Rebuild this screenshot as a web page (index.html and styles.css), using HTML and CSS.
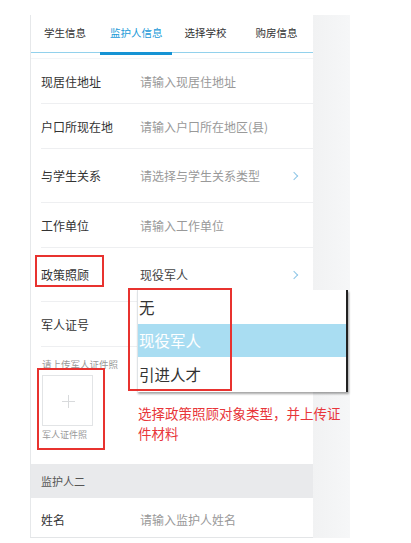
FILE: index.html
```html
<!DOCTYPE html>
<html>
<head>
    <meta charset="UTF-8">
    <link rel="stylesheet" href="styles.css">
</head>
<body>
    <div class="screen">
        <div class="panel">
            <div class="tabs">
                <div class="tab">学生信息</div>
                <div class="tab active">监护人信息</div>
                <div class="tab">选择学校</div>
                <div class="tab">购房信息</div>
            </div>
            <div class="form-list">
                <div class="form-row">
                    <span class="label">现居住地址</span>
                    <span class="value">请输入现居住地址</span>
                </div>
                <div class="form-row">
                    <span class="label">户口所现在地</span>
                    <span class="value">请输入户口所在地区(县)</span>
                </div>
                <div class="form-row tall">
                    <span class="label">与学生关系</span>
                    <span class="value">请选择与学生关系类型</span>
                    <span class="arrow"></span>
                </div>
                <div class="form-row">
                    <span class="label">工作单位</span>
                    <span class="value">请输入工作单位</span>
                </div>
                <div class="form-row tall">
                    <span class="label">政策照顾</span>
                    <span class="value filled">现役军人</span>
                    <span class="arrow"></span>
                </div>
                <div class="form-row">
                    <span class="label">军人证号</span>
                </div>
                <div class="upload-section">
                    <div class="upload-hint">请上传军人证件照</div>
                    <div class="upload-box"></div>
                    <div class="upload-caption">军人证件照</div>
                </div>
                <div class="group-title">监护人二</div>
                <div class="form-row last">
                    <span class="label">姓名</span>
                    <span class="value">请输入监护人姓名</span>
                </div>
            </div>
        </div>
        <div class="side-strip"></div>

        <div class="dropdown">
            <div class="dropdown-item">无</div>
            <div class="dropdown-item selected">现役军人</div>
            <div class="dropdown-item">引进人才</div>
        </div>

        <div class="mark mark-label"></div>
        <div class="mark mark-options"></div>
        <div class="mark mark-upload"></div>
        <div class="note">选择政策照顾对象类型，并上传证件材料</div>
    </div>
</body>
</html>
```

FILE: styles.css
```css
body {
    margin: 0;
    background: #fff;
    font-family: "Noto Sans CJK SC", "Liberation Sans", sans-serif;
    color: #333;
}

.screen {
    position: relative;
    width: 411px;
    height: 543px;
    display: flex;
    padding: 15px 0 0 30px;
    box-sizing: border-box;
}

.panel {
    width: 283px;
    height: 523px;
    background: #fff;
    border-left: 1px solid #e6e8ea;
    border-bottom: 1px solid #e3e5e7;
    box-sizing: border-box;
}

.side-strip {
    width: 37px;
    height: 523px;
    background: linear-gradient(to right, #f1f2f3, #f6f7f8);
}

.tabs {
    display: flex;
    height: 38px;
    border-bottom: 1px solid #92d1ec;
    box-sizing: border-box;
    padding-left: 13px;
}
.tab {
    position: relative;
    font-size: 10.5px;
    line-height: 35px;
    color: #333;
    margin-right: 22px;
    white-space: nowrap;
}
.tab:nth-child(2) {
    margin-left: 2px;
}
.tab:nth-child(4) {
    margin-left: 7px;
}
.tab.active {
    color: #1b9ad8;
}
.tab.active:after {
    content: "";
    position: absolute;
    left: -10px;
    right: -9px;
    bottom: -3px;
    height: 3px;
    background: #1593d4;
}

.form-list {
    margin-top: 5px;
    border-top: 1px solid #f3f5f7;
}

.form-row {
    display: flex;
    align-items: center;
    height: 44px;
    margin-left: 10px;
    border-bottom: 1px solid #eeeff1;
    font-size: 12px;
}
.form-row.tall {
    height: 53px;
}
.form-row.last {
    border-bottom: none;
    height: 43px;
}
.label {
    width: 99px;
    color: #333;
    white-space: nowrap;
}
.value {
    flex: 1;
    color: #999;
    white-space: nowrap;
}
.value.filled {
    color: #444;
}
.arrow {
    width: 5px;
    height: 5px;
    border-top: 1.5px solid #8ec6e6;
    border-right: 1.5px solid #8ec6e6;
    transform: rotate(45deg);
    margin-right: 16px;
}

.upload-section {
    height: 117px;
    padding-left: 11px;
    box-sizing: border-box;
    padding-top: 11px;
}
.upload-hint {
    font-size: 9.5px;
    color: #999;
    line-height: 12px;
}
.upload-box {
    position: relative;
    width: 51px;
    height: 51px;
    margin-top: 5px;
    border: 1px solid #e2e4e6;
    box-sizing: border-box;
}
.upload-box:before,
.upload-box:after {
    content: "";
    position: absolute;
    background: #d8dadc;
}
.upload-box:before {
    left: 19px;
    top: 25px;
    width: 13px;
    height: 1px;
}
.upload-box:after {
    left: 25px;
    top: 19px;
    width: 1px;
    height: 13px;
}
.upload-caption {
    font-size: 9px;
    color: #999;
    margin-top: 3px;
    line-height: 12px;
}

.group-title {
    height: 34px;
    background: #e9eaec;
    font-size: 11px;
    color: #555;
    line-height: 34px;
    padding-left: 10px;
}

.dropdown {
    position: absolute;
    left: 137px;
    top: 290px;
    width: 211px;
    height: 102px;
    background: #fff;
    border-left: 1px solid #dfe3e6;
    border-right: 2px solid #222;
    box-shadow: 1px 2px 2px rgba(0, 0, 0, 0.35);
    box-sizing: border-box;
}
.dropdown-item {
    height: 34px;
    line-height: 34px;
    font-size: 15.5px;
    color: #333;
    padding-left: 1px;
}
.dropdown-item.selected {
    height: 33px;
    line-height: 33px;
    background: #a9ddf2;
    color: #fff;
}

.mark {
    position: absolute;
    border: 2px solid #e8322f;
    box-sizing: border-box;
}
.mark-label {
    left: 35px;
    top: 255px;
    width: 69px;
    height: 32px;
}
.mark-options {
    left: 128px;
    top: 288px;
    width: 104px;
    height: 103px;
}
.mark-upload {
    left: 37px;
    top: 368px;
    width: 68px;
    height: 82px;
}

.note {
    position: absolute;
    left: 138px;
    top: 403px;
    width: 212px;
    font-size: 13.5px;
    line-height: 20px;
    color: #e8363a;
}
```
